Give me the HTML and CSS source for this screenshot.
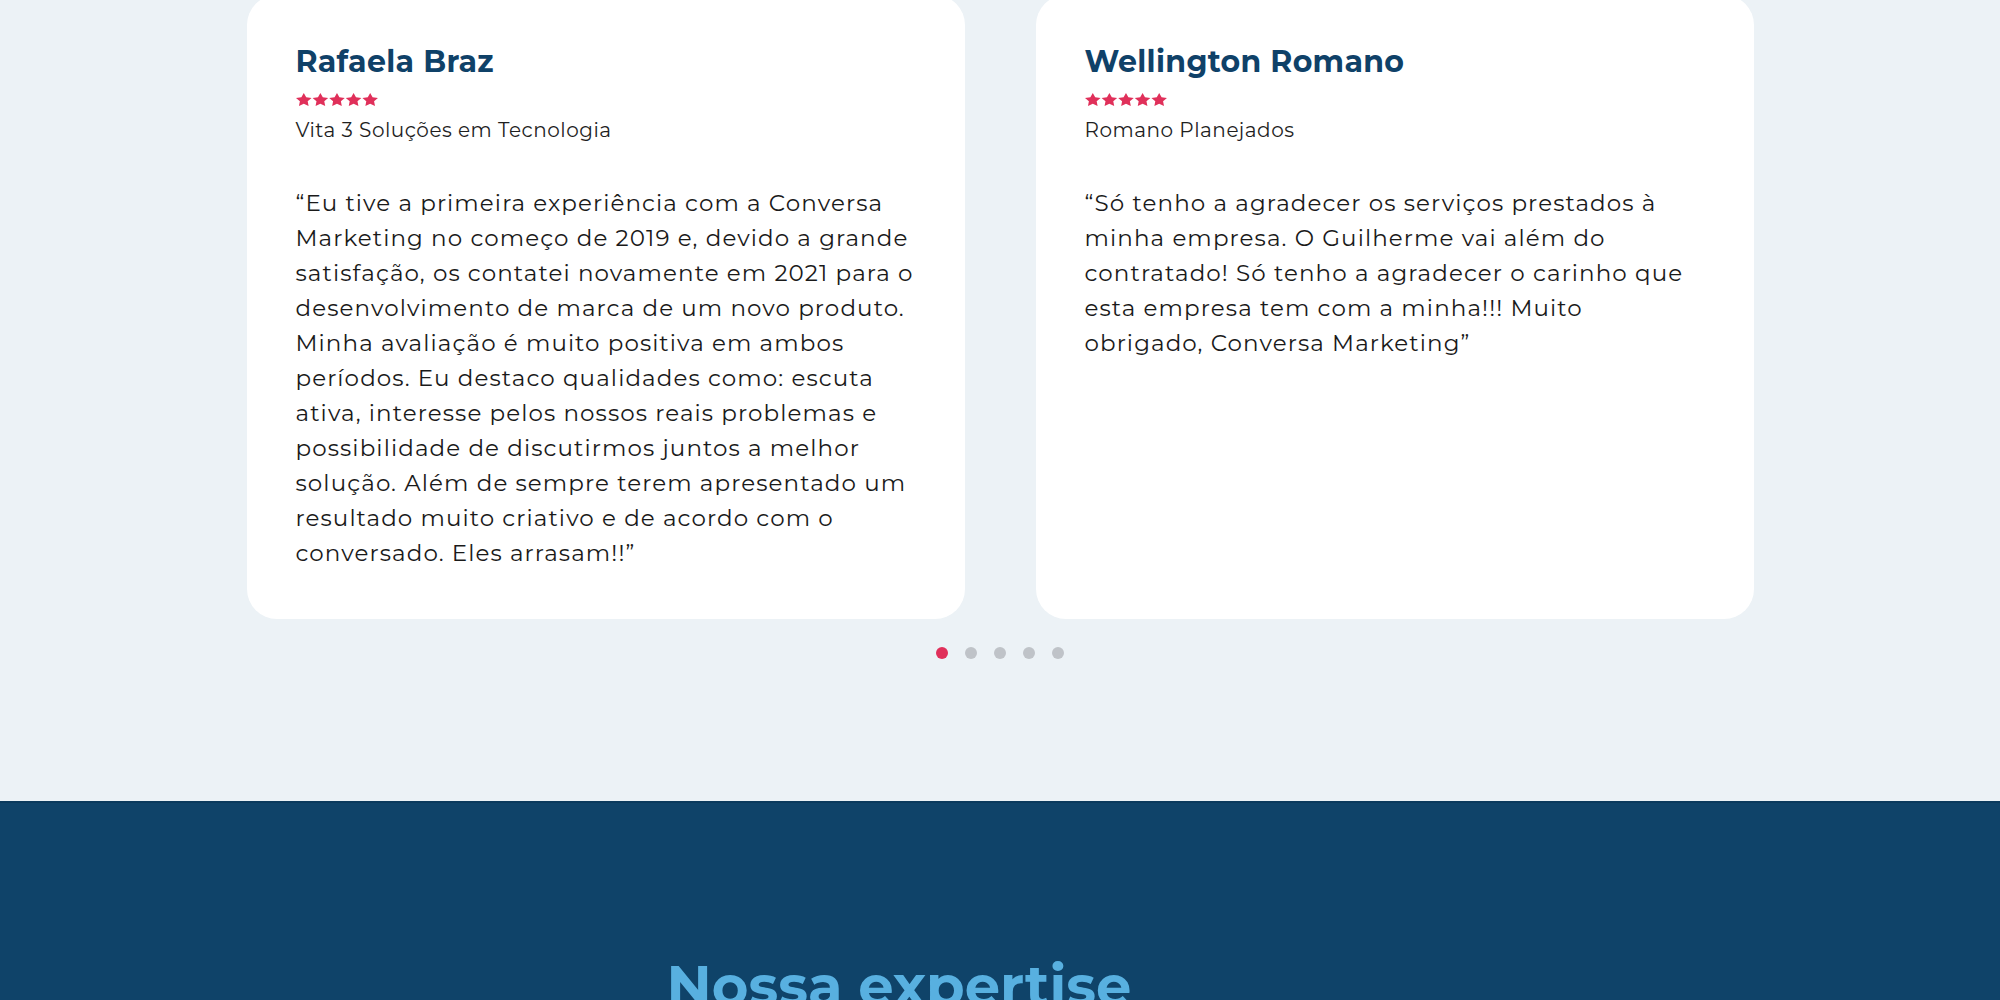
FILE: index.html
```html
<!DOCTYPE html>
<html lang="pt-BR">
<head>
<meta charset="utf-8">
<title>Depoimentos</title>
<link rel="stylesheet" href="styles.css">
</head>
<body>
<section class="testimonials">
  <div class="cards">
    <article class="card">
      <h3 class="card-name">Rafaela Braz</h3>
      <svg class="stars" viewBox="0 0 80 14.3" preserveAspectRatio="none" aria-label="5 estrelas">
        <defs>
          <polygon id="star" points="7.5,0 9.82,4.7 15,5.45 11.25,9.1 12.14,14.27 7.5,11.83 2.87,14.27 3.75,9.1 0,5.45 5.18,4.7"/>
        </defs>
        <use href="#star" x="0"/>
        <use href="#star" x="16"/>
        <use href="#star" x="32"/>
        <use href="#star" x="48"/>
        <use href="#star" x="64"/>
      </svg>
      <p class="card-company">Vita 3 Soluções em Tecnologia</p>
      <p class="card-quote">“Eu tive a primeira experiência com a Conversa<br>Marketing no começo de 2019 e, devido a grande<br>satisfação, os contatei novamente em 2021 para o<br>desenvolvimento de marca de um novo produto.<br>Minha avaliação é muito positiva em ambos<br>períodos. Eu destaco qualidades como: escuta<br>ativa, interesse pelos nossos reais problemas e<br>possibilidade de discutirmos juntos a melhor<br>solução. Além de sempre terem apresentado um<br>resultado muito criativo e de acordo com o<br>conversado. Eles arrasam!!”</p>
    </article>
    <article class="card">
      <h3 class="card-name">Wellington Romano</h3>
      <svg class="stars" viewBox="0 0 80 14.3" preserveAspectRatio="none" aria-label="5 estrelas">
        <use href="#star" x="0"/>
        <use href="#star" x="16"/>
        <use href="#star" x="32"/>
        <use href="#star" x="48"/>
        <use href="#star" x="64"/>
      </svg>
      <p class="card-company">Romano Planejados</p>
      <p class="card-quote">“Só tenho a agradecer os serviços prestados à<br>minha empresa. O Guilherme vai além do<br>contratado! Só tenho a agradecer o carinho que<br>esta empresa tem com a minha!!! Muito<br>obrigado, Conversa Marketing”</p>
    </article>
  </div>
  <div class="dots">
    <span class="dot dot-active"></span>
    <span class="dot"></span>
    <span class="dot"></span>
    <span class="dot"></span>
    <span class="dot"></span>
  </div>
</section>
<section class="expertise">
  <div class="expertise-inner">
    <h2 class="expertise-title">Nossa expertise</h2>
  </div>
</section>
</body>
</html>
```
FILE: styles.css
```css
* {
  box-sizing: border-box;
}

html, body {
  margin: 0;
  padding: 0;
}

body {
  background: #ecf2f6;
  font-family: "Montserrat", "DejaVu Sans", "Liberation Sans", sans-serif;
  color: #1a1a1a;
  overflow: hidden;
}

.testimonials {
  margin-top: -5px;
  padding-bottom: 142px;
}

.cards {
  width: 1507px;
  margin: 0 auto;
  display: grid;
  grid-template-columns: 718px 718px;
  column-gap: 71px;
}

.card {
  background: #ffffff;
  border-radius: 30px;
  padding: 49px 50px 48px 49px;
}

.card-name {
  margin: 0;
  font-size: 30px;
  line-height: 36px;
  font-weight: 700;
  letter-spacing: 0.3px;
  color: #0f4168;
}

.stars {
  display: block;
  width: 83px;
  height: 13px;
  margin-top: 13px;
  fill: #e0305a;
}

.card-company {
  margin: 11px 0 0 0;
  font-size: 20px;
  line-height: 26px;
  letter-spacing: 0.5px;
  color: #1f1f1f;
}

.card-quote {
  margin: 43px 0 0 0;
  font-size: 23px;
  line-height: 35px;
  letter-spacing: 1.1px;
  white-space: nowrap;
  color: #1a1a1a;
}

.dots {
  display: flex;
  justify-content: center;
  gap: 17px;
  margin-top: 28px;
}

.dot {
  width: 12px;
  height: 12px;
  border-radius: 50%;
  background: #bfc3c8;
}

.dot-active {
  background: #e0305a;
}

.expertise {
  background: #0f4369;
  border-top: 2px solid #0b3a5d;
  min-height: 400px;
  padding-top: 150px;
}

.expertise-inner {
  width: 1507px;
  margin: 0 auto;
  padding-left: 420px;
}

.expertise-title {
  margin: 0;
  font-size: 56px;
  line-height: 66px;
  font-weight: 700;
  color: #58b0e0;
}
```
